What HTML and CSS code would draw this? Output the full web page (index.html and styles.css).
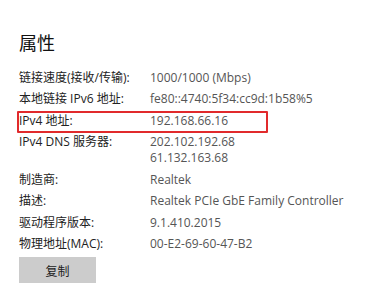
FILE: index.html
```html
<!DOCTYPE html>
<html lang="zh-CN">
<head>
<meta charset="utf-8">
<link rel="stylesheet" href="styles.css">
</head>
<body>
<div class="panel">
  <h1 class="title">属性</h1>
  <div class="props">
    <div class="row"><div class="label">链接速度(接收/传输):</div><div class="value">1000/1000 (Mbps)</div></div>
    <div class="row"><div class="label">本地链接 IPv6 地址:</div><div class="value">fe80::4740:5f34:cc9d:1b58%5</div></div>
    <div class="row highlight"><div class="label">IPv4 地址:</div><div class="value">192.168.66.16</div></div>
    <div class="row"><div class="label">IPv4 DNS 服务器:</div><div class="value">202.102.192.68<br>61.132.163.68</div></div>
    <div class="row"><div class="label">制造商:</div><div class="value">Realtek</div></div>
    <div class="row"><div class="label">描述:</div><div class="value">Realtek PCIe GbE Family Controller</div></div>
    <div class="row"><div class="label">驱动程序版本:</div><div class="value">9.1.410.2015</div></div>
    <div class="row"><div class="label">物理地址(MAC):</div><div class="value">00-E2-69-60-47-B2</div></div>
  </div>
  <button class="copy">复制</button>
</div>
</body>
</html>
```
FILE: styles.css
```css
html, body {
  margin: 0;
  padding: 0;
  background: #ffffff;
}
body {
  width: 370px;
  height: 304px;
  overflow: hidden;
  font-family: "Open Sans", "Noto Sans CJK SC", sans-serif;
  font-size: 12px;
  color: #222;
}
.panel {
  padding: 31px 0 0 19px;
}
.title {
  margin: 0;
  font-family: "Noto Sans CJK SC", sans-serif;
  font-weight: normal;
  font-size: 18px;
  line-height: 22px;
  color: #111;
}
.props {
  display: flex;
  flex-direction: column;
  gap: 5.5px;
  margin-top: 16.5px;
}
.row {
  display: flex;
  line-height: 16px;
  position: relative;
}
.label {
  width: 131px;
  flex: none;
  color: #222;
}
.value {
  color: #555;
}
.highlight::before {
  content: "";
  position: absolute;
  left: -2px;
  top: -2px;
  width: 247px;
  height: 18px;
  border: 2px solid #e12a2c;
  border-radius: 1px;
}
.copy {
  display: block;
  margin-top: 5px;
  width: 77px;
  height: 26px;
  border: none;
  background: #cccccc;
  font-family: "Noto Sans CJK SC", sans-serif;
  font-size: 12px;
  color: #222;
  padding: 0;
}
```
